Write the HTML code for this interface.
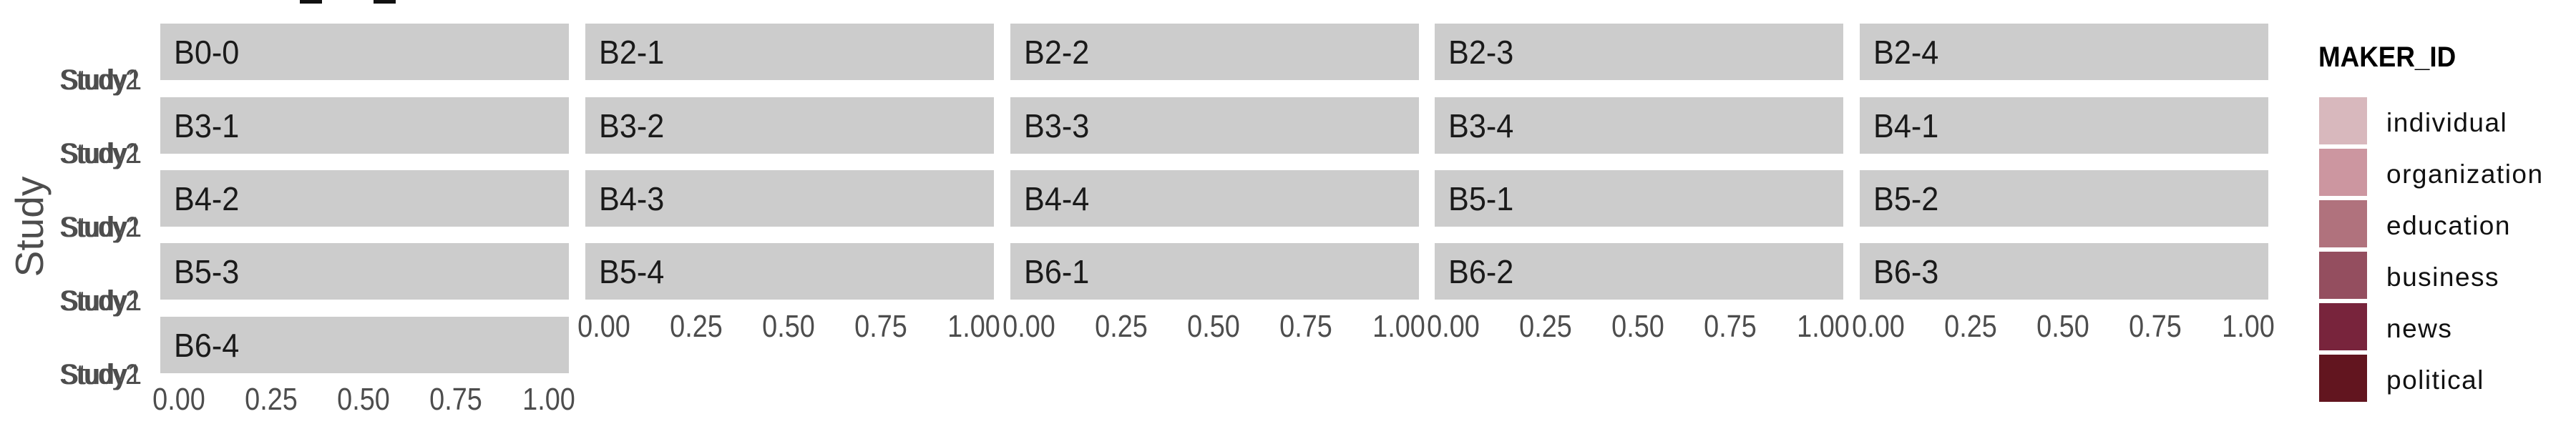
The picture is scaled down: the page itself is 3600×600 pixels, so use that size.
<!DOCTYPE html>
<html><head><meta charset="utf-8"><style>
body{margin:0;width:3600px;height:600px;background:#fff;position:relative;overflow:hidden;font-family:"Liberation Sans",sans-serif}
div{line-height:1}
.s{position:absolute;background:#cccccc;height:79px;width:571px}
.s span{position:absolute;left:19px;top:17px;font-size:46px;line-height:1;color:#1a1a1a;transform:scaleX(0.94);transform-origin:left top}
.t{position:absolute;font-size:44px;color:#4d4d4d;transform:translateX(-50%) scaleX(0.86);white-space:nowrap}
.y{position:absolute;left:83px;font-size:40px;color:#4d4d4d;transform:scaleX(0.9);transform-origin:left top}
.lg{position:absolute;left:3241px;width:67px;height:66px}
.ll{position:absolute;left:3335px;font-size:37px;color:#111;letter-spacing:1.5px}
</style></head><body>
<div style="position:absolute;left:419px;top:0;width:31px;height:5px;background:#111"></div>
<div style="position:absolute;left:522px;top:0;width:31px;height:5px;background:#111"></div>
<div style="position:absolute;left:14px;top:317px;font-size:55px;color:#4d4d4d;transform-origin:0 0;transform:rotate(-90deg) translate(-50%,0)">Study</div>

<div class="y" style="top:92px">Study2</div><div class="y" style="top:92px;left:86px">Study1</div>
<div class="y" style="top:195px">Study2</div><div class="y" style="top:195px;left:86px">Study1</div>
<div class="y" style="top:298px">Study2</div><div class="y" style="top:298px;left:86px">Study1</div>
<div class="y" style="top:401px">Study2</div><div class="y" style="top:401px;left:86px">Study1</div>
<div class="y" style="top:504px">Study2</div><div class="y" style="top:504px;left:86px">Study1</div>

<div class="s" style="left:224px;top:33px"><span>B0-0</span></div>
<div class="s" style="left:818px;top:33px"><span>B2-1</span></div>
<div class="s" style="left:1412px;top:33px"><span>B2-2</span></div>
<div class="s" style="left:2005px;top:33px"><span>B2-3</span></div>
<div class="s" style="left:2599px;top:33px"><span>B2-4</span></div>

<div class="s" style="left:224px;top:136px"><span>B3-1</span></div>
<div class="s" style="left:818px;top:136px"><span>B3-2</span></div>
<div class="s" style="left:1412px;top:136px"><span>B3-3</span></div>
<div class="s" style="left:2005px;top:136px"><span>B3-4</span></div>
<div class="s" style="left:2599px;top:136px"><span>B4-1</span></div>

<div class="s" style="left:224px;top:238px"><span>B4-2</span></div>
<div class="s" style="left:818px;top:238px"><span>B4-3</span></div>
<div class="s" style="left:1412px;top:238px"><span>B4-4</span></div>
<div class="s" style="left:2005px;top:238px"><span>B5-1</span></div>
<div class="s" style="left:2599px;top:238px"><span>B5-2</span></div>

<div class="s" style="left:224px;top:340px"><span>B5-3</span></div>
<div class="s" style="left:818px;top:340px"><span>B5-4</span></div>
<div class="s" style="left:1412px;top:340px"><span>B6-1</span></div>
<div class="s" style="left:2005px;top:340px"><span>B6-2</span></div>
<div class="s" style="left:2599px;top:340px"><span>B6-3</span></div>

<div class="s" style="left:224px;top:443px"><span>B6-4</span></div>

<div class="t" style="left:250px;top:537px">0.00</div>
<div class="t" style="left:379px;top:537px">0.25</div>
<div class="t" style="left:508px;top:537px">0.50</div>
<div class="t" style="left:637px;top:537px">0.75</div>
<div class="t" style="left:767px;top:537px">1.00</div>

<div class="t" style="left:844px;top:435px">0.00</div>
<div class="t" style="left:973px;top:435px">0.25</div>
<div class="t" style="left:1102px;top:435px">0.50</div>
<div class="t" style="left:1231px;top:435px">0.75</div>
<div class="t" style="left:1361px;top:435px">1.00</div>
<div class="t" style="left:1438px;top:435px">0.00</div>
<div class="t" style="left:1567px;top:435px">0.25</div>
<div class="t" style="left:1696px;top:435px">0.50</div>
<div class="t" style="left:1825px;top:435px">0.75</div>
<div class="t" style="left:1955px;top:435px">1.00</div>
<div class="t" style="left:2031px;top:435px">0.00</div>
<div class="t" style="left:2160px;top:435px">0.25</div>
<div class="t" style="left:2289px;top:435px">0.50</div>
<div class="t" style="left:2418px;top:435px">0.75</div>
<div class="t" style="left:2548px;top:435px">1.00</div>
<div class="t" style="left:2625px;top:435px">0.00</div>
<div class="t" style="left:2754px;top:435px">0.25</div>
<div class="t" style="left:2883px;top:435px">0.50</div>
<div class="t" style="left:3012px;top:435px">0.75</div>
<div class="t" style="left:3142px;top:435px">1.00</div>

<div style="position:absolute;left:3240px;top:60px;font-size:40px;font-weight:bold;color:#000;transform:scaleX(0.92);transform-origin:left top">MAKER_ID</div>
<div class="lg" style="top:136px;background:#d8b8bd"></div>
<div class="lg" style="top:208px;background:#cc96a0"></div>
<div class="lg" style="top:280px;background:#b0727d"></div>
<div class="lg" style="top:352px;background:#944e5f"></div>
<div class="lg" style="top:424px;background:#78243c"></div>
<div class="lg" style="top:496px;background:#62151f"></div>
<div class="ll" style="top:153px">individual</div>
<div class="ll" style="top:225px">organization</div>
<div class="ll" style="top:297px">education</div>
<div class="ll" style="top:369px">business</div>
<div class="ll" style="top:441px">news</div>
<div class="ll" style="top:513px">political</div>
</body></html>
